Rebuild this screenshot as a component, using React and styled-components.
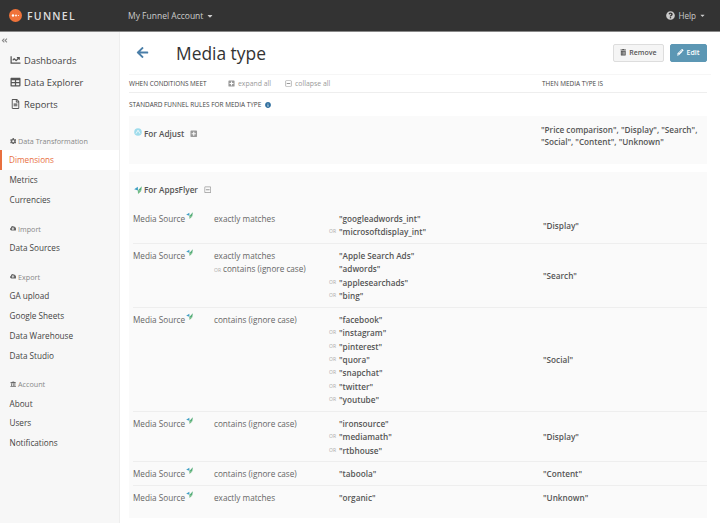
import React from "react";
import styled, { createGlobalStyle } from "styled-components";
import { FaChartLine, FaTable, FaRegFileAlt, FaCog, FaCloudUploadAlt, FaCloudDownloadAlt, FaUniversity, FaArrowLeft, FaTrashAlt, FaPencilAlt, FaQuestionCircle, FaInfoCircle, FaPlusSquare, FaRegMinusSquare, FaAngleDoubleLeft, FaCaretDown } from "react-icons/fa";

const Global = createGlobalStyle`
  html, body { margin: 0; padding: 0; background: #fff; }
  body { font-family: "Open Sans", "Liberation Sans", sans-serif; color: #555; width: 720px; height: 523px; overflow: hidden; }
  * { box-sizing: border-box; }
`;
const Page = styled.div`width: 720px; height: 523px; display: flex; flex-direction: column; overflow: hidden;`;
const TopBar = styled.header`height: 32px; flex: none; background: #333; border-bottom: 1px solid #888; display: flex; align-items: center; padding: 0 14px 0 9px; color: #ccc;`;
const Brand = styled.div`width: 119px; display: flex; align-items: center; gap: 5px; font-size: 10.5px; font-weight: 600; letter-spacing: 1.25px; color: #ddd;`;
const Account = styled.div`font-size: 8.5px; display: flex; align-items: center; gap: 3px; flex: 1; color: #ccc;`;
const Help = styled.div`font-size: 8.1px; display: flex; align-items: center; gap: 3px; color: #ccc;`;
const Body = styled.div`flex: 1; display: flex; min-height: 0;`;
const Side = styled.nav`width: 120px; flex: none; background: #f7f7f7; border-right: 1px solid #eee; padding-top: 3px;`;
const Collapse = styled.div`height: 11px; padding-left: 1px; color: #888; font-size: 7px; display: flex; align-items: center;`;
const TopList = styled.div`margin-top: 3px; margin-bottom: 17px;`;
const TopItem = styled.div`height: 22px; display: flex; align-items: center; padding-left: 10px; gap: 3px; font-size: 9.3px; color: #444;
  svg { width: 11px; font-size: 10px; color: #555; }`;
const Section = styled.div`height: 18px; display: flex; align-items: center; padding-left: 9.5px; gap: 2px; font-size: 7.2px; color: #888; margin-top: ${p => p.$top}px;
  svg { font-size: 6.5px; color: #666; }`;
const Item = styled.div`height: 19.9px; display: flex; align-items: center; padding-left: ${p => p.$active ? 7 : 9.5}px; font-size: 8.2px; color: ${p => p.$active ? "#e8703f" : "#444"};
  background: ${p => p.$active ? "#fff" : "transparent"}; border-left: ${p => p.$active ? "2.5px solid #e8703f" : "0"};`;
const Main = styled.main`flex: 1; padding: 0 13px 0 9px; min-width: 0;`;
const TitleRow = styled.div`height: 43px; display: flex; align-items: center; padding-bottom: 1px; border-bottom: 1px solid #f6f6f6; margin-right: -4px; padding-right: 4px;`;
const Back = styled.div`width: 47px; padding-left: 7px; color: #4a7ea8; font-size: 13px; display: flex; align-items: center;`;
const Title = styled.h1`margin: 0; flex: 1; font-size: 17.4px; font-weight: 400; color: #333;`;
const Buttons = styled.div`display: flex; gap: 6px;`;
const Btn = styled.button`height: 18px; padding: 0 ${p => p.$primary ? 6.5 : 6}px; display: flex; align-items: center; gap: 3px; font: 600 7px "Open Sans", sans-serif; border-radius: 2px;
  color: ${p => p.$primary ? "#fff" : "#555"}; background: ${p => p.$primary ? "#5c97b4" : "#f5f5f5"}; border: 1px solid ${p => p.$primary ? "#5c97b4" : "#ddd"};
  svg { font-size: 6.5px; }`;
const ColHead = styled.div`height: 18px; display: grid; grid-template-columns: 99px 57px 257px 1fr; align-items: center; border-bottom: 1px solid #eee; font-size: 6.4px; color: #444;`;
const ColTool = styled.span`display: flex; align-items: center; gap: 3px; font-size: 6.9px; color: #999; svg { font-size: 7px; }`;
const Std = styled.div`height: 23px; display: flex; align-items: center; gap: 4px; font-size: 6.45px; color: #444; svg { font-size: 6px; color: #2f6f9f; }`;
const Card = styled.section`background: #fafafa; margin-bottom: 8px;`;
const AdjustGrid = styled.div`height: 48px; display: grid; grid-template-columns: 1fr 161px; padding: 0 5px;`;
const CardName = styled.div`display: flex; align-items: center; gap: 2px; height: 15px; font-size: 8.2px; font-weight: 600; color: #555; margin-top: 10px; svg.t { font-size: 7.5px; color: #999; margin-left: 4px; }`;
const FlyerName = styled(CardName)`padding-left: 5px; margin-top: 0;`;
const FlyerHead = styled.div`padding-top: 10px;`;
const AdjustResult = styled.div`font-size: 8.2px; font-weight: 600; color: #555; line-height: 11.6px; padding-top: 8px;`;
const Rows = styled.div`margin-top: 15px; padding: 0 0 0 4px;`;
const Row = styled.div`display: grid; grid-template-columns: 81px 115px 214px 1fr; align-items: start; padding: 0 0 ${p => p.$last ? 13.5 : 4.2}px; border-bottom: ${p => p.$last ? "0" : "1px solid #eee"}; margin-bottom: ${p => p.$last ? 0 : 5}px; font-size: 8.2px;`;
const Source = styled.div`line-height: 13.4px; display: flex; color: #666; gap: 1px;`;
const Ops = styled.div`line-height: 13.4px; color: #666;`;
const Values = styled.div`line-height: 13.4px; font-weight: 600; color: #555;`;
const Line = styled.div`display: flex;`;
const Or = styled.span`width: 10px; font-size: 5px; font-weight: 400; color: #aaa; flex: none;`;
const OpOr = styled.span`font-size: 5px; color: #aaa; margin-right: 2px;`;
const Res = styled.div`align-self: center; font-weight: 600; color: #555; line-height: 13px;`;

const Logo = () => (
  <svg width="13" height="13" viewBox="0 0 13 13">
    <circle cx="6.5" cy="6.5" r="6.5" fill="#f0733a" />
    <circle cx="4" cy="6.5" r="1.2" fill="#fff" /><circle cx="7" cy="6.5" r=".9" fill="#fff" /><circle cx="9.4" cy="6.5" r=".6" fill="#fff" />
  </svg>
);
const Flyer = ({ s = 8 }) => (
  <svg width={s} height={s} viewBox="0 0 8 8">
    <path d="M3.6 4.8 7.8.2 7.2 4.8Z" fill="#55ad78" /><path d="M4 4.4 .2 3.2 3.8.8Z" fill="#3f9fc4" /><path d="M3.8 4.4 7.2 5.2 4 8Z" fill="#72bb85" />
  </svg>
);
const AdjustIcon = () => (
  <svg width="8" height="8" viewBox="0 0 8 8" style={{ marginTop: -3 }}>
    <circle cx="4" cy="4" r="3.8" fill="#9fdcec" /><path d="M2 5.6 4 2.2 6 5.6" stroke="#fff" strokeWidth=".8" fill="none" />
  </svg>
);

const rows = [
  { ops: [[0, "exactly matches"]], vals: [[0, "googleadwords_int"], [1, "microsoftdisplay_int"]], res: "Display" },
  { ops: [[0, "exactly matches"], [1, "contains (ignore case)"]], vals: [[0, "Apple Search Ads"], [0, "adwords"], [1, "applesearchads"], [1, "bing"]], res: "Search" },
  { ops: [[0, "contains (ignore case)"]], vals: [[0, "facebook"], [1, "instagram"], [1, "pinterest"], [1, "quora"], [1, "snapchat"], [1, "twitter"], [1, "youtube"]], res: "Social" },
  { ops: [[0, "contains (ignore case)"]], vals: [[0, "ironsource"], [1, "mediamath"], [1, "rtbhouse"]], res: "Display" },
  { ops: [[0, "contains (ignore case)"]], vals: [[0, "taboola"]], res: "Content" },
  { ops: [[0, "exactly matches"]], vals: [[0, "organic"]], res: "Unknown", last: true },
];

export default function App() {
  return (
    <Page>
      <Global />
      <TopBar>
        <Brand><Logo />FUNNEL</Brand>
        <Account>My Funnel Account <FaCaretDown size={8} /></Account>
        <Help><FaQuestionCircle size={9} /> Help <FaCaretDown size={7} /></Help>
      </TopBar>
      <Body>
        <Side>
          <Collapse><FaAngleDoubleLeft /></Collapse>
          <TopList>
            <TopItem><FaChartLine />Dashboards</TopItem>
            <TopItem><FaTable />Data Explorer</TopItem>
            <TopItem><FaRegFileAlt />Reports</TopItem>
          </TopList>
          <Section $top={0}><FaCog />Data Transformation</Section>
          <Item $active>Dimensions</Item>
          <Item>Metrics</Item>
          <Item>Currencies</Item>
          <Section $top={10}><FaCloudDownloadAlt />Import</Section>
          <Item>Data Sources</Item>
          <Section $top={10}><FaCloudUploadAlt />Export</Section>
          <Item>GA upload</Item>
          <Item>Google Sheets</Item>
          <Item>Data Warehouse</Item>
          <Item>Data Studio</Item>
          <Section $top={10}><FaUniversity />Account</Section>
          <Item>About</Item>
          <Item>Users</Item>
          <Item>Notifications</Item>
        </Side>
        <Main>
          <TitleRow>
            <Back><FaArrowLeft /></Back>
            <Title>Media type</Title>
            <Buttons>
              <Btn><FaTrashAlt />Remove</Btn>
              <Btn $primary><FaPencilAlt />Edit</Btn>
            </Buttons>
          </TitleRow>
          <ColHead>
            <span>WHEN CONDITIONS MEET</span>
            <ColTool><FaPlusSquare />expand all</ColTool>
            <ColTool><FaRegMinusSquare />collapse all</ColTool>
            <span>THEN MEDIA TYPE IS</span>
          </ColHead>
          <Std>STANDARD FUNNEL RULES FOR MEDIA TYPE <FaInfoCircle /></Std>
          <Card>
            <AdjustGrid>
              <CardName><AdjustIcon />For Adjust<FaPlusSquare className="t" /></CardName>
              <AdjustResult>"Price comparison", "Display", "Search", "Social", "Content", "Unknown"</AdjustResult>
            </AdjustGrid>
          </Card>
          <Card>
            <FlyerHead>
              <FlyerName><Flyer />For AppsFlyer<FaRegMinusSquare className="t" /></FlyerName>
            </FlyerHead>
            <Rows>
              {rows.map((r, i) => (
                <Row key={i} $last={r.last}>
                  <Source>Media Source<Flyer s={7} /></Source>
                  <Ops>{r.ops.map(([o, t]) => <div key={t}>{o ? <OpOr>OR</OpOr> : null}{t}</div>)}</Ops>
                  <Values>{r.vals.map(([o, t]) => <Line key={t}><Or>{o ? "OR" : ""}</Or>"{t}"</Line>)}</Values>
                  <Res>"{r.res}"</Res>
                </Row>
              ))}
            </Rows>
          </Card>
        </Main>
      </Body>
    </Page>
  );
}
